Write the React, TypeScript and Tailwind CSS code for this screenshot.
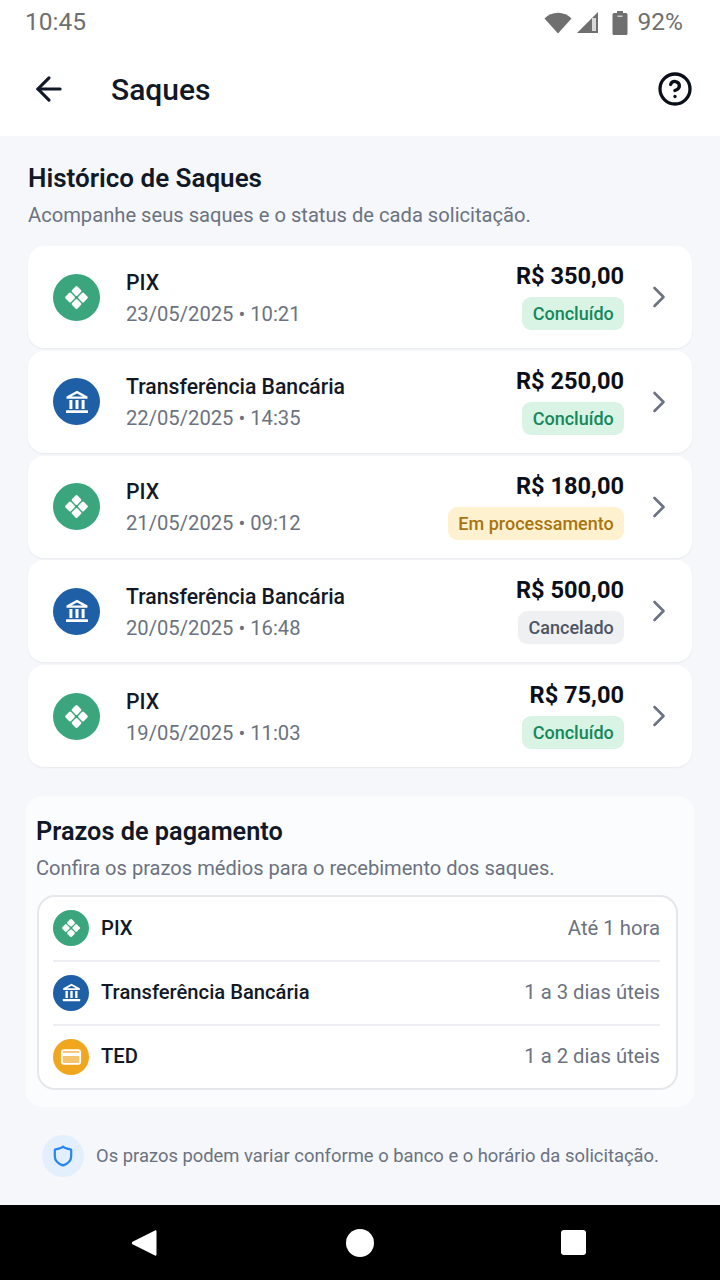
import React from 'react';
import { ArrowLeft, CircleHelp } from 'lucide-react';

type Method = 'pix' | 'bank' | 'ted';
type Status = 'done' | 'pending' | 'canceled';

interface Withdrawal {
  method: Method;
  title: string;
  date: string;
  amount: string;
  status: Status;
}

const withdrawals: Withdrawal[] = [
  { method: 'pix', title: 'PIX', date: '23/05/2025 • 10:21', amount: 'R$ 350,00', status: 'done' },
  { method: 'bank', title: 'Transferência Bancária', date: '22/05/2025 • 14:35', amount: 'R$ 250,00', status: 'done' },
  { method: 'pix', title: 'PIX', date: '21/05/2025 • 09:12', amount: 'R$ 180,00', status: 'pending' },
  { method: 'bank', title: 'Transferência Bancária', date: '20/05/2025 • 16:48', amount: 'R$ 500,00', status: 'canceled' },
  { method: 'pix', title: 'PIX', date: '19/05/2025 • 11:03', amount: 'R$ 75,00', status: 'done' },
];

const deadlines: { method: Method; title: string; time: string }[] = [
  { method: 'pix', title: 'PIX', time: 'Até 1 hora' },
  { method: 'bank', title: 'Transferência Bancária', time: '1 a 3 dias úteis' },
  { method: 'ted', title: 'TED', time: '1 a 2 dias úteis' },
];

const statusStyles: Record<Status, { label: string; className: string }> = {
  done: { label: 'Concluído', className: 'bg-[#d9f3e4] text-[#14885a]' },
  pending: { label: 'Em processamento', className: 'bg-[#fdf1cf] text-[#a9740f]' },
  canceled: { label: 'Cancelado', className: 'bg-[#eff0f2] text-[#4b5563]' },
};

// Four rounded squares turned into a diamond
const PixGlyph = ({ size }: { size: number }) => (
  <svg width={size} height={size} viewBox="0 0 24 24" fill="white">
    <rect x="8.3" y="2.1" width="7.4" height="7.4" rx="1.4" transform="rotate(45 12 5.8)" />
    <rect x="8.3" y="14.5" width="7.4" height="7.4" rx="1.4" transform="rotate(45 12 18.2)" />
    <rect x="2.1" y="8.3" width="7.4" height="7.4" rx="1.4" transform="rotate(45 5.8 12)" />
    <rect x="14.5" y="8.3" width="7.4" height="7.4" rx="1.4" transform="rotate(45 18.2 12)" />
  </svg>
);

const BankGlyph = ({ size }: { size: number }) => (
  <svg width={size} height={size} viewBox="0 0 24 24" fill="white">
    <path fillRule="evenodd" d="M12 .8 1.5 6.6v2.2h21V6.6L12 .8Zm0 2.6-5.6 3.2h11.2L12 3.4Z" />
    <rect x="4.4" y="10" width="3" height="9" />
    <rect x="10.5" y="10" width="3" height="9" />
    <rect x="16.6" y="10" width="3" height="9" />
    <rect x="1" y="20.2" width="22" height="2.8" rx="0.6" />
  </svg>
);

const CardGlyph = () => (
  <svg width="22" height="22" viewBox="0 0 24 24" fill="none">
    <rect x="2" y="4.5" width="20" height="15" rx="2.2" fill="white" fillOpacity="0.35" stroke="white" strokeWidth="2" />
    <rect x="2" y="7.5" width="20" height="3.4" fill="white" />
  </svg>
);

const MethodIcon = ({ method, large }: { method: Method; large?: boolean }) => {
  const bg = method === 'pix' ? 'bg-[#3ba67e]' : method === 'bank' ? 'bg-[#1f5fa6]' : 'bg-[#f0a71f]';
  return (
    <div className={`flex shrink-0 items-center justify-center rounded-full ${bg} ${large ? 'h-[47px] w-[47px]' : 'h-[36px] w-[36px]'}`}>
      {method === 'pix' && <PixGlyph size={large ? 25 : 20} />}
      {method === 'bank' && <BankGlyph size={large ? 24 : 19} />}
      {method === 'ted' && <CardGlyph />}
    </div>
  );
};

const StatusBar = () => (
  <div className="flex h-[44px] items-center justify-between bg-white pl-[25px] pr-[37px] pt-[1px] text-[24.5px] text-[#6f6f6f]">
    <span>10:45</span>
    <div className="flex items-center">
      <svg width="28" height="22" viewBox="0 0 28 22" fill="#6f6f6f">
        <path d="M.5 6.5C4 3 9 .8 14 .8S24 3 27.5 6.5L14 21.5.5 6.5Z" />
      </svg>
      <svg className="ml-[4px]" width="23" height="23" viewBox="0 0 23 23">
        <path d="M22 1v21H1L22 1Z" fill="#6f6f6f" />
        <path d="M16 7h4v13h-4Z" fill="#d8d8d8" />
      </svg>
      <svg className="ml-[13px]" width="16" height="24" viewBox="0 0 16 24" fill="#6f6f6f">
        <path d="M5 0h6v2h3a1.5 1.5 0 0 1 1.5 1.5v19A1.5 1.5 0 0 1 14 24H2a1.5 1.5 0 0 1-1.5-1.5v-19A1.5 1.5 0 0 1 2 2h3V0Z" />
        <path d="M5.5 4.5h5V6h-5Z" fill="#c9c9c9" />
      </svg>
      <span className="ml-[10px]">92%</span>
    </div>
  </div>
);

const WithdrawalCard = ({ item }: { item: Withdrawal }) => {
  const status = statusStyles[item.status];
  return (
    <div className="flex h-[102px] items-center rounded-[16px] bg-white pl-[25px] pr-[26px] shadow-[0_1px_2px_rgba(17,24,39,0.06)]">
      <MethodIcon method={item.method} large />
      <div className="ml-[26px] flex-1 pt-[2px]">
        <div className="text-[21.2px] leading-[31px] font-medium text-[#111827]">{item.title}</div>
        <div className="mt-[1px] text-[20.2px] leading-[31px] text-[#6b7280]">{item.date}</div>
      </div>
      <div className="flex flex-col items-end pb-[4px]">
        <div className="text-[23.6px] leading-[32px] font-bold text-[#0b0f19]">{item.amount}</div>
        <div className={`mt-[5px] flex h-[33px] items-center rounded-[9px] px-[10.25px] text-[18px] font-medium ${status.className}`}>
          {status.label}
        </div>
      </div>
      <svg className="ml-[28px]" width="14" height="22" viewBox="0 0 14 22" fill="none">
        <path d="M2.5 2 11.500 11 2.500 20" stroke="#6b7280" strokeWidth="2.6" strokeLinecap="round" strokeLinejoin="round" />
      </svg>
    </div>
  );
};

export default function App() {
  return (
    <div className="flex h-[1280px] w-[720px] flex-col overflow-hidden bg-[#f5f7fa] font-['Roboto',sans-serif]">
      <StatusBar />

      <header className="flex h-[92px] items-center bg-white pb-[2px] pl-[30px] pr-[27px]">
        <ArrowLeft size={38} color="#111827" strokeWidth={2} />
        <h1 className="ml-[43px] flex-1 text-[30px] font-medium text-[#111827]">Saques</h1>
        <CircleHelp size={36} color="#0b0f19" strokeWidth={2.2} />
      </header>

      <main className="flex-1 px-[28px] pt-[24px]">
        <h2 className="text-[26px] leading-[36px] font-semibold text-[#111827]">Histórico de Saques</h2>
        <p className="mt-[4px] text-[20.16px] leading-[30px] text-[#6b7280]">
          Acompanhe seus saques e o status de cada solicitação.
        </p>

        <div className="mt-[16px] flex flex-col gap-[2.75px]">
          {withdrawals.map((item, index) => (
            <WithdrawalCard key={index} item={item} />
          ))}
        </div>

        <section className="mx-[-2px] mt-[29px] h-[311px] rounded-[16px] bg-[#fbfcfe] pl-[10px] pr-[16px] pt-[18px]">
          <h2 className="text-[25.3px] leading-[36px] font-semibold text-[#111827]">Prazos de pagamento</h2>
          <p className="mt-[3px] text-[20.1px] leading-[30px] text-[#6b7280]">
            Confira os prazos médios para o recebimento dos saques.
          </p>
          <div className="ml-[1px] mt-[12px] rounded-[18px] border-2 border-[#e5e7eb] bg-white">
            {deadlines.map((row, index) => (
              <div
                key={row.title}
                className={`ml-[14px] mr-[16px] flex items-center ${index === 0 ? 'h-[62.5px]' : 'h-[64px] border-t-2 border-[#eceef1]'}`}
              >
                <MethodIcon method={row.method} />
                <span className="ml-[12px] flex-1 text-[20.2px] font-medium text-[#111827]">{row.title}</span>
                <span className="text-[20.3px] text-[#6b7280]">{row.time}</span>
              </div>
            ))}
          </div>
        </section>

        <div className="mt-[28px] flex items-center pl-[14px]">
          <div className="flex h-[42px] w-[42px] items-center justify-center rounded-full bg-[#e3effd]">
            <svg width="22" height="22" viewBox="0 0 22 22" fill="none">
              <path
                d="M11 1.600c1.500 1.600 4.300 2.500 7.600 2.700.4 0 .6.3.6.6v6.300c0 4.400-3.400 7.500-8.200 9.200-4.800-1.700-8.200-4.800-8.200-9.200V4.900c0-.3.2-.6.6-.6C6.700 4.100 9.500 3.200 11 1.600Z"
                stroke="#2684f0"
                strokeWidth="2.2"
                strokeLinejoin="round"
              />
            </svg>
          </div>
          <p className="ml-[12px] text-[18.4px] text-[#6b7280]">
            Os prazos podem variar conforme o banco e o horário da solicitação.
          </p>
        </div>
      </main>

      <nav className="flex h-[75px] items-center bg-black">
        <svg className="ml-[131px]" width="26" height="28" viewBox="0 0 26 28" fill="white">
          <path d="M24 1.500c.8-.5 1.500 0 1.500.9v23.200c0 .9-.7 1.400-1.500.9L1.500 15.200c-.8-.5-.8-1.900 0-2.400L24 1.500Z" />
        </svg>
        <div className="ml-[189px] h-[28px] w-[28px] rounded-full bg-white" />
        <div className="ml-[187px] h-[25px] w-[25px] rounded-[3px] bg-white" />
      </nav>
    </div>
  );
}
